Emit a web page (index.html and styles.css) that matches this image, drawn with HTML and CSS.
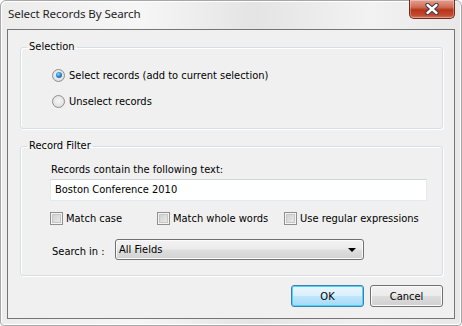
FILE: index.html
```html
<!DOCTYPE html>
<html>
<head>
<meta charset="utf-8">
<link rel="stylesheet" href="styles.css">
</head>
<body>
<div class="window">
  <div class="titlebar">
    <div class="title">Select Records By Search</div>
    <div class="close">
      <svg width="16" height="12" viewBox="0 0 16 12">
        <path d="M3.5 2 L12.5 10 M12.5 2 L3.5 10" stroke="#3b3b4a" stroke-width="4.4" stroke-linecap="round"/>
        <path d="M3.5 2 L12.5 10 M12.5 2 L3.5 10" stroke="#ffffff" stroke-width="2.4" stroke-linecap="round"/>
      </svg>
    </div>
  </div>
  <div class="client">
    <fieldset class="group group-selection">
      <legend>Selection</legend>
      <div class="group-body selection-body">
        <div class="radio-row">
          <span class="radio checked"></span><span>Select records (add to current selection)</span>
        </div>
        <div class="radio-row">
          <span class="radio"></span><span>Unselect records</span>
        </div>
      </div>
    </fieldset>
    <fieldset class="group group-filter">
      <legend>Record Filter</legend>
      <div class="group-body filter-body">
        <div class="text-label">Records contain the following text:</div>
        <div class="textbox">Boston Conference 2010</div>
        <div class="checks">
          <div class="check-item"><span class="checkbox"></span><span>Match case</span></div>
          <div class="check-item"><span class="checkbox"></span><span>Match whole words</span></div>
          <div class="check-item"><span class="checkbox"></span><span>Use regular expressions</span></div>
        </div>
        <div class="search-row">
          <span class="search-label">Search in :</span>
          <div class="combo"><span>All Fields</span><span class="arrow"></span></div>
        </div>
      </div>
    </fieldset>
    <div class="buttons">
      <div class="btn default">OK</div>
      <div class="btn">Cancel</div>
    </div>
  </div>
</div>
</body>
</html>
```
FILE: styles.css
```css
html, body {
  margin: 0;
  padding: 0;
  background: #ffffff;
}
body {
  font-family: "DejaVu Sans Condensed", "DejaVu Sans", sans-serif;
  font-size: 11px;
  color: #000;
}
.window {
  width: 462px;
  height: 326px;
  box-sizing: border-box;
  border: 1px solid #a7a7a7;
  border-radius: 6px 6px 4px 4px;
  background: linear-gradient(90deg, #ececec 0%, #f6f6f6 30%, #e4e4e4 55%, #f2f2f2 80%, #e8e8e8 100%);
  box-shadow: inset 1px 1px 0 #ffffff, inset -1px -1px 0 #ffffff;
  display: flex;
  flex-direction: column;
  padding: 0 6px 6px 6px;
}
.titlebar {
  height: 28px;
  display: flex;
  align-items: flex-start;
  justify-content: space-between;
}
.title {
  font-family: "Noto Sans", "Liberation Sans", sans-serif;
  font-size: 11.6px;
  padding-top: 5px;
  padding-left: 1px;
  color: #1e1e1e;
  letter-spacing: -0.1px;
}
.close {
  width: 46px;
  height: 19px;
  margin-top: -1px;
  box-sizing: border-box;
  border: 1px solid #6e2b20;
  border-top: none;
  border-radius: 0 0 5px 5px;
  background: linear-gradient(180deg, #e4a090 0%, #cf6c57 40%, #b8341b 55%, #c24a30 85%, #d67a62 100%);
  box-shadow: inset 0 0 0 1px rgba(255,255,255,0.3);
  display: flex;
  align-items: center;
  justify-content: center;
}
.client {
  flex: 1;
  border: 1px solid #757575;
  background: #f0f0f0;
  padding: 10px 11px 11px 12px;
  display: flex;
  flex-direction: column;
}
.group {
  margin: 0;
  border: 1px solid #d5dfe5;
  border-radius: 3px;
  box-shadow: inset 1px 1px 0 #ffffff, 1px 1px 0 #ffffff;
  padding: 0;
  min-width: 0;
  box-sizing: border-box;
}
.group legend {
  margin-left: 6px;
  padding: 0 2px;
  line-height: 14px;
  height: 14px;
}
.group-selection {
  height: 89px;
}
.selection-body {
  padding: 13px 0 0 31px;
  display: flex;
  flex-direction: column;
  gap: 10px;
}
.radio-row {
  display: flex;
  align-items: center;
  height: 16px;
  gap: 4px;
}
.radio {
  width: 13px;
  height: 13px;
  box-sizing: border-box;
  border-radius: 50%;
  border: 1px solid #8e8f8f;
  background: radial-gradient(circle at 50% 45%, #f6f6f6 0%, #e6e6e6 55%, #d0d0d0 100%);
  position: relative;
}
.radio.checked::after {
  content: "";
  position: absolute;
  left: 2.5px;
  top: 2.5px;
  width: 6px;
  height: 6px;
  border-radius: 50%;
  background: radial-gradient(circle at 40% 35%, #8ad4ff 0%, #2c8bd2 45%, #15487d 100%);
}
.group-filter {
  margin-top: 10px;
  height: 137px;
}
.filter-body {
  padding: 10px 15px 0 29px;
}
.text-label {
  height: 14px;
  line-height: 14px;
  padding-left: 1px;
}
.textbox {
  margin-top: 2px;
  height: 22px;
  box-sizing: border-box;
  border: 1px solid #e3e9ef;
  border-top-color: #cfd6dd;
  background: #ffffff;
  padding-left: 4px;
  line-height: 20px;
}
.checks {
  margin-top: 10px;
  display: grid;
  grid-template-columns: 107px 127px auto;
  height: 14px;
}
.check-item {
  display: flex;
  align-items: center;
  gap: 3px;
}
.checkbox {
  width: 13px;
  height: 13px;
  box-sizing: border-box;
  border: 1px solid #8e8f8f;
  box-shadow: inset 0 0 0 1px #f4f4f4, inset 0 0 0 2px #c6c6c6;
  background-image: linear-gradient(135deg, #cbcbcb 0%, #eeeeee 100%);
}
.search-row {
  margin-top: 14px;
  display: flex;
  align-items: center;
  height: 21px;
}
.search-label {
  width: 65px;
  padding-left: 2px;
  padding-top: 3px;
  box-sizing: border-box;
}
.combo {
  width: 249px;
  height: 21px;
  box-sizing: border-box;
  border: 1px solid #707070;
  border-radius: 3px;
  background: linear-gradient(180deg, #f3f3f3 0%, #ebebeb 48%, #dedede 52%, #d2d2d2 100%);
  box-shadow: inset 0 0 0 1px #fbfbfb;
  display: flex;
  align-items: center;
  justify-content: space-between;
  padding: 0 7px 0 3px;
}
.arrow {
  width: 0;
  height: 0;
  border-left: 4px solid transparent;
  border-right: 4px solid transparent;
  border-top: 4px solid #000;
}
.buttons {
  margin-top: 9px;
  display: flex;
  justify-content: flex-end;
  gap: 6px;
}
.btn {
  width: 73px;
  height: 22px;
  box-sizing: border-box;
  border: 1px solid #707070;
  border-radius: 3px;
  background: linear-gradient(180deg, #f2f2f2 0%, #ebebeb 48%, #dddddd 52%, #cfcfcf 100%);
  box-shadow: inset 0 0 0 1px #fcfcfc;
  display: flex;
  align-items: center;
  justify-content: center;
}
.btn.default {
  border-color: #3c7fb1;
  background: linear-gradient(180deg, #eaf6fd 0%, #d9f0fc 48%, #bee6fd 52%, #a7d9f5 100%);
  box-shadow: inset 0 0 0 1px #48d6fb;
}
```
